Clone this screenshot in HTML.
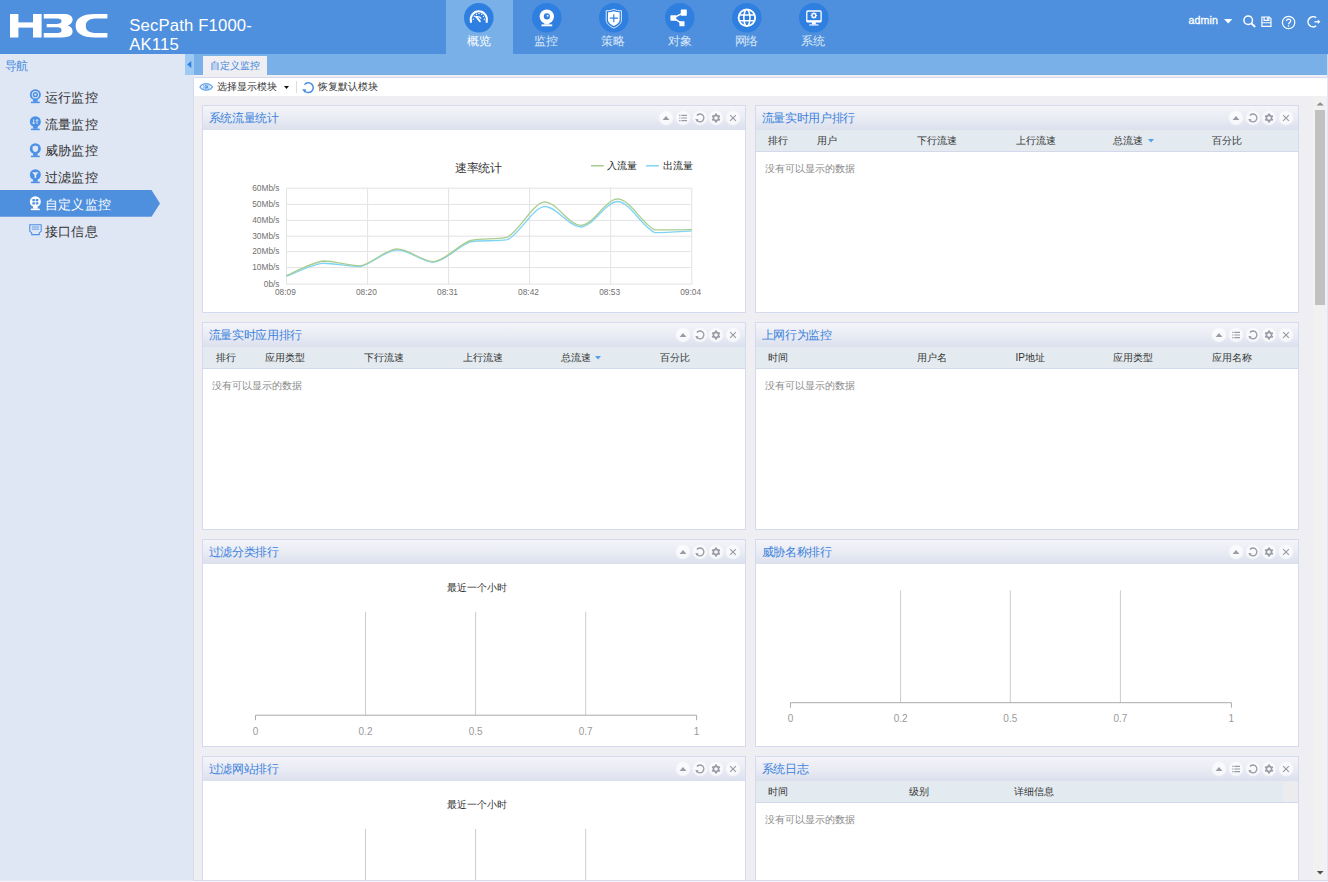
<!DOCTYPE html>
<html><head><meta charset="utf-8"><title>H3C</title>
<style>
*{margin:0;padding:0;box-sizing:border-box}
html,body{width:1328px;height:882px;overflow:hidden;background:#eeeef3;font-family:"Liberation Sans",sans-serif;font-size:10px;color:#333}
div,svg,span{position:absolute}
svg{overflow:visible}
#hdr{left:0;top:0;width:1328px;height:54px;background:#4f90de}
#prod{left:129.3px;top:16.2px;transform:translateY(.5px);color:#fff;font-size:16.7px;line-height:18.5px;white-space:nowrap;letter-spacing:.15px}
.nav{top:0;width:67px;height:54px}
.navbg{left:446px;top:0;width:67px;height:54px;background:#7ab0e8}
.nav svg{left:19.2px;top:2.6px;width:29.6px;height:29.6px}
.nav .t{left:0;width:67px;top:33.1px;text-align:center;color:#dbe8f8;font-size:11.67px;letter-spacing:-.33px;line-height:16px}
.nav.on .t{color:#fff}
#side{left:0;top:54px;width:193px;height:828px;background:#dfe6f4}
#side .h{left:4.5px;top:4px;letter-spacing:-.33px;font-size:11.67px;line-height:16px;color:#4a8fe0}
.mi{left:0;width:185px;height:27px;letter-spacing:.33px;font-size:13.3px;line-height:27px;color:#333}
.mi span{left:44.6px;top:0;white-space:nowrap}
.mi svg{left:28.9px;top:5.4px;width:12.7px;height:14.8px}
.mi.on{color:#fff}
#handle{left:185px;top:54px;width:9px;height:21px;background:#9ccaf3}
#tabbar{left:194px;top:54px;width:1134px;height:21px;background:#7ab0e8}
#tab{left:203px;top:56px;width:64px;height:21px;background:#eeeef3;color:#3d84dc;font-size:10px;line-height:19px;text-align:center}
#tool{left:194px;top:78px;width:1134px;height:18px;background:#fff}
.tx{top:0;line-height:18px;font-size:10px;color:#333;white-space:nowrap}
.pn{width:544px;height:208px;background:#fff;border:1px solid #d6daee}
.pn .hd{left:0;top:0;width:542px;height:24px;background:linear-gradient(#f4f4f9,#eaecf4 50%,#dbe0ee);}
.pn .ti{left:5.8px;top:-0.9px;line-height:25px;letter-spacing:-.33px;font-size:11.67px;color:#3b82dc;white-space:nowrap}
.pn .gh{left:0;top:24px;width:542px;height:22px;background:#e4ebf0;border-bottom:1px solid #d3d8ec}
.pn .gh span{top:1px;line-height:20px;font-size:10px;color:#333;white-space:nowrap}
.pn .nd{left:8.5px;top:55.6px;line-height:14px;font-size:10px;color:#8a8a8a;white-space:nowrap}
.bt{top:3.6px;width:16px;height:16px}
</style></head><body>
<div id="wrap" style="left:0;top:0;width:1328px;height:882px;overflow:hidden">
<div id="hdr">
<svg style="left:10.3px;top:13.7px" width="98" height="24" viewBox="0 0 98 24" fill="#fff">
<rect x="0" y="0" width="8.4" height="23.5"/><rect x="23" y="0" width="8.6" height="23.5"/><rect x="8" y="8.4" width="16" height="5.2"/>
<path d="M33.75,0 H53 C59.5,0 62.6,2 62.6,5.6 C62.6,9 60,11 57.5,11.5 C60.5,12 62.6,14 62.6,17.6 C62.6,21.5 59,23.5 52,23.5 H33.75 V19.1 H47 C50.5,19.1 51.5,18 51.5,16.3 C51.5,14.3 50.5,13.2 47,13.2 H36.7 V9.9 H47 C50.5,9.9 51.5,8.8 51.5,7.1 C51.5,5.3 50.5,4.4 47,4.4 H33.75 Z"/>
<path d="M97.4,0 H85 C72,0 65.6,4.5 65.6,11.75 C65.6,19 72,23.5 85,23.5 H97.4 V19.1 H87 C79,19.1 75.8,16.5 75.8,11.75 C75.8,7 79,4.4 87,4.4 H97.4 Z"/>
</svg>
<div id="prod">SecPath F1000-<br>AK115</div>
<div class="navbg"></div><div class="nav on" style="left:445.1px"><svg viewBox="0 0 30 30"><circle cx="15" cy="15" r="15" fill="#2f7fe0"/><g transform="translate(0,-1.25)"><path d="M7.0,21.3 L7.0,19.6 A8.2,8.2 0 1 1 23.0,19.6 L23.0,21.3" fill="none" stroke="#fff" stroke-width="2.1"/>
<g fill="#fff"><circle cx="9.5" cy="17.6" r=".75"/><circle cx="10.6" cy="14.6" r=".75"/><circle cx="12.6" cy="12.6" r=".75"/><circle cx="15.2" cy="11.9" r=".75"/><circle cx="17.9" cy="12.7" r=".75"/><circle cx="19.8" cy="14.8" r=".75"/><circle cx="20.7" cy="17.6" r=".75"/></g>
<path d="M12.2,15.3 C14,14.9 16.2,15.4 17,16.6" fill="none" stroke="#fff" stroke-width="1.3" stroke-linecap="round"/>
<path d="M12.4,15.2 L16.1,19.7" stroke="#fff" stroke-width="1.9" stroke-linecap="round"/></g></svg><div class="t">概览</div></div>
<div class="nav" style="left:512.6px"><svg viewBox="0 0 30 30"><circle cx="15" cy="15" r="15" fill="#2f7fe0"/><circle cx="15" cy="13.8" r="7.3" fill="#fff"/><circle cx="15.1" cy="13.6" r="3.1" fill="#2f7fe0"/><circle cx="15.8" cy="13" r="1.05" fill="#fff" opacity=".85"/>
<path d="M12.7,20 L17.3,20 L17.5,21.9 L12.5,21.9 Z" fill="#fff"/><rect x="9.6" y="21.7" width="10.9" height="1.9" fill="#fff"/></svg><div class="t">监控</div></div>
<div class="nav" style="left:579.4px"><svg viewBox="0 0 30 30"><circle cx="15" cy="15" r="15" fill="#2f7fe0"/><path d="M15,6.3 C17.5,7.6 20,7.9 22.7,7.8 L22.7,17.5 C22.7,20.8 19.6,23.4 15,25.5 C10.4,23.4 7.3,20.8 7.3,17.5 L7.3,7.8 C10,7.9 12.5,7.6 15,6.3 Z" fill="none" stroke="#fff" stroke-width="0.85"/>
<path d="M15,8.3 C17,9.2 19,9.5 20.9,9.4 L20.9,17.2 C20.9,19.6 18.6,21.6 15,23.2 C11.4,21.6 9.1,19.6 9.1,17.2 L9.1,9.4 C11,9.5 13,9.2 15,8.3 Z" fill="#fff"/>
<path d="M15,11.5 L15,19.6 M11,15.3 L19.2,15.3" stroke="#2f7fe0" stroke-width="1.15"/></svg><div class="t">策略</div></div>
<div class="nav" style="left:646.3px"><svg viewBox="0 0 30 30"><circle cx="15" cy="15" r="15" fill="#2f7fe0"/><path d="M8.5,15.1 L19,9.8 M8.5,15.1 L17.2,21" stroke="#fff" stroke-width="1.5"/>
<rect x="5.5" y="12.3" width="5.9" height="5.7" rx="0.5" fill="#fff"/><rect x="16" y="6.6" width="6.1" height="6.3" rx="0.5" fill="#fff"/><rect x="14.6" y="18.5" width="5.2" height="5.1" rx="0.5" fill="#fff"/></svg><div class="t">对象</div></div>
<div class="nav" style="left:712.9px"><svg viewBox="0 0 30 30"><circle cx="15" cy="15" r="15" fill="#2f7fe0"/><g fill="none" stroke="#fff"><circle cx="15.1" cy="15" r="8.4" stroke-width="1.9"/><ellipse cx="15.1" cy="15" rx="3.1" ry="8.4" stroke-width="1.6"/><path d="M7.3,12.1 H22.9 M7.3,17.9 H22.9" stroke-width="1.5"/></g></svg><div class="t">网络</div></div>
<div class="nav" style="left:779.6px"><svg viewBox="0 0 30 30"><circle cx="15" cy="15" r="15" fill="#2f7fe0"/><rect x="7.9" y="8.1" width="14.5" height="10.9" rx="1" fill="none" stroke="#fff" stroke-width="1.3"/><rect x="7.9" y="17.4" width="14.5" height="2" fill="#fff"/>
<path d="M13.2,19.3 L16.9,19.3 L17.1,21.8 L13,21.8 Z" fill="#fff"/><rect x="10.4" y="21.7" width="9.4" height="1.1" fill="#fff"/>
<circle cx="15.1" cy="12.65" r="1.9" fill="none" stroke="#fff" stroke-width="1.3"/><path d="M15.1,9.4 V10.6 M15.1,14.7 V15.9 M11.85,12.65 H13.05 M17.15,12.65 H18.35 M12.8,10.35 L13.65,11.2 M16.55,14.1 L17.4,14.95 M17.4,10.35 L16.55,11.2 M13.65,14.1 L12.8,14.95" stroke="#fff" stroke-width="1.15"/></svg><div class="t">系统</div></div>

<div style="left:1188.5px;top:12.5px;color:#fff;font-size:10.6px;line-height:15px;-webkit-text-stroke:.3px #fff;letter-spacing:.15px">admin</div>
<svg style="left:1224px;top:18.6px" width="9" height="5"><path d="M0,0 H8.4 L4.2,4.4 Z" fill="#fff"/></svg>
<svg style="left:1242px;top:14px" width="15" height="15" viewBox="0 0 15 15"><circle cx="6.2" cy="6.2" r="4.3" fill="none" stroke="#fff" stroke-width="1.5"/><path d="M9.5,9.5 L12.7,12.5" stroke="#fff" stroke-width="1.8" stroke-linecap="round"/></svg>
<svg style="left:1260.5px;top:15.5px" width="12" height="12" viewBox="0 0 12 12"><path d="M0.9,1 H8.3 L10,2.7 V10.4 H0.9 Z" fill="none" stroke="#fff" stroke-width="1.15"/><path d="M3.1,1 V4.3 H7.9 V1 M6.5,1.4 V3.6 M0.9,6.7 H10" fill="none" stroke="#fff" stroke-width="1.15"/></svg>
<svg style="left:1281px;top:14.5px" width="15" height="15" viewBox="0 0 15 15"><circle cx="7.6" cy="7.5" r="6.2" fill="none" stroke="#fff" stroke-width="1.2"/><path d="M5.5,6.1 C5.5,3.5 9.7,3.5 9.7,6 C9.7,7.5 7.6,7.6 7.6,9.3" fill="none" stroke="#fff" stroke-width="1.2"/><circle cx="7.6" cy="11" r=".8" fill="#fff"/></svg>
<svg style="left:1306px;top:15px" width="16" height="14" viewBox="0 0 16 14"><path d="M10.2,2.7 A5.1,5.1 0 1 0 10.2,10.9" fill="none" stroke="#fff" stroke-width="1.5"/><path d="M8.4,6.8 H13" stroke="#fff" stroke-width="1.3"/><path d="M11.8,4.6 L14.4,6.8 L11.8,9 Z" fill="#fff"/></svg>

</div>
<div id="side"><div class="h">导航</div>
<div class="mi" style="top:30.0px"><svg viewBox="0 0 12 14"><circle cx="6" cy="5.4" r="5.2" fill="#4a90e6"/><path d="M4,10 H8 L8.4,12 H3.6 Z" fill="#4a90e6"/><rect x="1.8" y="12" width="8.4" height="1.4" fill="#4a90e6"/><circle cx="6" cy="5.4" r="3" fill="none" stroke="#dfe6f4" stroke-width="1"/><circle cx="6" cy="5.4" r="1.1" fill="#dfe6f4"/></svg><span>运行监控</span></div>
<div class="mi" style="top:56.7px"><svg viewBox="0 0 12 14"><circle cx="6" cy="5.4" r="5.2" fill="#4a90e6"/><path d="M4,10 H8 L8.4,12 H3.6 Z" fill="#4a90e6"/><rect x="1.8" y="12" width="8.4" height="1.4" fill="#4a90e6"/><path d="M4.4,3.2 V7.4 M3.2,6.2 L4.4,7.6 L5.6,6.2 M7.6,7.6 V3.4 M6.4,4.6 L7.6,3.2 L8.8,4.6" fill="none" stroke="#dfe6f4" stroke-width=".9"/></svg><span>流量监控</span></div>
<div class="mi" style="top:83.4px"><svg viewBox="0 0 12 14"><circle cx="6" cy="5.4" r="5.2" fill="#4a90e6"/><path d="M4,10 H8 L8.4,12 H3.6 Z" fill="#4a90e6"/><rect x="1.8" y="12" width="8.4" height="1.4" fill="#4a90e6"/><path d="M6,2.4 L8.6,3.4 V5.6 C8.6,7.2 7.4,8.2 6,8.8 C4.6,8.2 3.4,7.2 3.4,5.6 V3.4 Z" fill="#dfe6f4"/></svg><span>威胁监控</span></div>
<div class="mi" style="top:110.1px"><svg viewBox="0 0 12 14"><circle cx="6" cy="5.4" r="5.2" fill="#4a90e6"/><path d="M4,10 H8 L8.4,12 H3.6 Z" fill="#4a90e6"/><rect x="1.8" y="12" width="8.4" height="1.4" fill="#4a90e6"/><path d="M3,3 H9 L6.8,5.8 V8.4 H5.2 V5.8 Z" fill="#dfe6f4"/></svg><span>过滤监控</span></div>
<svg style="left:0;top:136.4px" width="162" height="27"><path d="M0,0 H151.5 L160,13.4 L151.5,26.8 H0 Z" fill="#4f90de"/></svg><div class="mi on" style="top:136.8px"><svg viewBox="0 0 12 14"><circle cx="6" cy="5.4" r="5.2" fill="#fff"/><path d="M4,10 H8 L8.4,12 H3.6 Z" fill="#fff"/><rect x="1.8" y="12" width="8.4" height="1.4" fill="#fff"/><path d="M3.2,2.8 H5.6 V5 H3.2 Z M6.4,2.8 H8.8 V5 H6.4 Z M3.2,5.8 H5.6 V8 H3.2 Z M6.4,5.8 H8.8 V8 H6.4 Z" fill="#4f90de"/></svg><span>自定义监控</span></div>
<div class="mi" style="top:163.5px"><svg viewBox="0 0 12 14" style="left:28.5px;width:13px"><path d="M0.6,1.6 H11.4 V7.8 L9.6,9.4 V11 H2.4 V9.4 L0.6,7.8 Z" fill="none" stroke="#4a90e6" stroke-width="1"/><path d="M2.6,3.8 H9.4 M2.6,5.8 H9.4" stroke="#4a90e6" stroke-width=".8"/></svg><span>接口信息</span></div>

</div>
<div id="handle"><svg width="9" height="21" style="left:0;top:0"><path d="M6.3,7 L6.3,14 L2.2,10.5 Z" fill="#2f7fe0"/></svg></div>
<div id="tabbar"></div>
<div style="left:193px;top:77px;width:1135px;height:1px;background:#d6d9ee"></div>
<div style="left:193px;top:77px;width:1px;height:805px;background:#d6d9ee"></div>
<div id="tab">自定义监控</div>
<div id="tool">
<svg style="left:5.2px;top:4.3px" width="15" height="10" viewBox="0 0 15 10"><path d="M1,4.9 C3.6,0.6 10.8,0.6 13.4,4.9 C10.8,9.2 3.6,9.2 1,4.9 Z" fill="none" stroke="#6aa6ec" stroke-width="1.35"/><circle cx="7.2" cy="4.9" r="3.1" fill="none" stroke="#7db2ee" stroke-width=".9"/><circle cx="7.2" cy="4.9" r="1.9" fill="#4a8fe0"/><circle cx="6.9" cy="4.7" r=".7" fill="#cfe2f8"/></svg>
<div class="tx" style="left:23.2px">选择显示模块</div>
<svg style="left:90px;top:7.5px" width="6" height="4"><path d="M0,0 H5 L2.5,3 Z" fill="#111"/></svg>
<div style="left:102px;top:3px;width:1px;height:12px;background:#dcdcdc"></div>
<svg style="left:107.5px;top:3px" width="13" height="13" viewBox="0 0 13 13"><path d="M2.4,9.6 A4.9,4.9 0 1 0 2.5,3.6" fill="none" stroke="#4a8fe0" stroke-width="1.5"/><path d="M0.2,8.3 L4.2,8.2 L2.6,11.8 Z" fill="#4a8fe0"/></svg>
<div class="tx" style="left:124.2px">恢复默认模块</div>

</div>
<div class="pn" style="left:202px;top:105px"><div class="hd"></div><div class="ti">系统流量统计</div><svg class="bt" style="left:454.8px" viewBox="0 0 16 16"><circle cx="8" cy="8" r="7.6" fill="#fff" opacity=".35"/><circle cx="8" cy="8" r="6.7" fill="#fff" opacity=".55"/><path d="M4.6,9.9 L8,5.9 L11.4,9.9 Z" fill="#9a9aa6"/></svg><svg class="bt" style="left:471.7px" viewBox="0 0 16 16"><circle cx="8" cy="8" r="7.6" fill="#fff" opacity=".35"/><circle cx="8" cy="8" r="6.7" fill="#fff" opacity=".55"/><path d="M4.2,5.4 H5.4 M4.2,8 H5.4 M4.2,10.6 H5.4" stroke="#9a9aa6" stroke-width="1.2"/><path d="M6.3,5.4 H12 M6.3,8 H12 M6.3,10.6 H12" stroke="#9a9aa6" stroke-width="1.1"/></svg><svg class="bt" style="left:488.5px" viewBox="0 0 16 16"><circle cx="8" cy="8" r="7.6" fill="#fff" opacity=".35"/><circle cx="8" cy="8" r="6.7" fill="#fff" opacity=".55"/><path d="M5,10.4 A3.9,3.9 0 1 0 4.9,5.5" fill="none" stroke="#9a9aa6" stroke-width="1.3"/><path d="M3.3,9 L6.5,9.3 L4.9,12 Z" fill="#9a9aa6"/></svg><svg class="bt" style="left:505.4px" viewBox="0 0 16 16"><circle cx="8" cy="8" r="7.6" fill="#fff" opacity=".35"/><circle cx="8" cy="8" r="6.7" fill="#fff" opacity=".55"/><circle cx="8" cy="8" r="2.6" fill="none" stroke="#9a9aa6" stroke-width="1.6"/><path d="M8,3.6 V5 M8,11 V12.4 M4.2,5.8 L5.4,6.5 M10.6,9.5 L11.8,10.2 M11.8,5.8 L10.6,6.5 M5.4,9.5 L4.2,10.2" stroke="#9a9aa6" stroke-width="2"/></svg><svg class="bt" style="left:522.2px" viewBox="0 0 16 16"><circle cx="8" cy="8" r="7.6" fill="#fff" opacity=".35"/><circle cx="8" cy="8" r="6.7" fill="#fff" opacity=".55"/><path d="M5.1,5.1 L10.9,10.9 M10.9,5.1 L5.1,10.9" stroke="#9a9aa6" stroke-width="1.15"/></svg><svg style="left:0;top:25px" width="542" height="181" viewBox="203 131 542 181"><path d="M286.5,188.2 H691.8" stroke="#e3e3e3" stroke-width="1"/><path d="M286.5,204.4 H691.8" stroke="#e3e3e3" stroke-width="1"/><path d="M286.5,220.4 H691.8" stroke="#e3e3e3" stroke-width="1"/><path d="M286.5,236.2 H691.8" stroke="#e3e3e3" stroke-width="1"/><path d="M286.5,251.6 H691.8" stroke="#e3e3e3" stroke-width="1"/><path d="M286.5,267.5 H691.8" stroke="#e3e3e3" stroke-width="1"/><path d="M286.5,284.1 H691.8" stroke="#e3e3e3" stroke-width="1"/><path d="M286.5,188.2 V284.1" stroke="#e3e3e3" stroke-width="1"/><path d="M367.6,188.2 V284.1" stroke="#e3e3e3" stroke-width="1"/><path d="M448.6,188.2 V284.1" stroke="#e3e3e3" stroke-width="1"/><path d="M529.6,188.2 V284.1" stroke="#e3e3e3" stroke-width="1"/><path d="M610.7,188.2 V284.1" stroke="#e3e3e3" stroke-width="1"/><path d="M691.8,188.2 V284.1" stroke="#e3e3e3" stroke-width="1"/><path d="M286.40,276.20 C292.54,274.03 310.97,264.82 323.25,263.20 C335.53,263.20 347.82,266.50 360.10,266.50 C372.38,264.27 384.67,250.52 396.95,249.80 C409.23,249.80 421.52,262.20 433.80,262.20 C446.08,260.87 458.37,245.55 470.65,241.80 C482.93,239.70 495.22,241.80 507.50,239.70 C519.78,233.80 532.07,208.52 544.35,206.40 C556.63,206.40 568.92,227.00 581.20,227.00 C593.48,226.18 605.77,201.50 618.05,201.50 C630.33,202.43 642.62,227.70 654.90,232.60 C667.18,232.60 685.61,231.18 691.75,230.90" fill="none" stroke="#7fd4f6" stroke-width="1.35"/><path d="M286.40,275.70 C292.54,273.25 310.97,262.63 323.25,261.00 C335.53,261.00 347.82,265.90 360.10,265.90 C372.38,263.88 384.67,249.62 396.95,248.90 C409.23,248.90 421.52,261.60 433.80,261.60 C446.08,260.20 458.37,244.58 470.65,240.50 C482.93,237.10 495.22,240.50 507.50,237.10 C519.78,230.67 532.07,203.85 544.35,201.90 C556.63,201.90 568.92,225.40 581.20,225.40 C593.48,224.90 605.77,198.90 618.05,198.90 C630.33,199.65 642.62,224.77 654.90,229.90 C667.18,229.90 685.61,229.73 691.75,229.70" fill="none" stroke="#a9cd8e" stroke-width="1.35"/><g font-size="8.33" fill="#707070" text-anchor="end"><text x="279.5" y="190.7">60Mb/s</text><text x="279.5" y="206.9">50Mb/s</text><text x="279.5" y="222.9">40Mb/s</text><text x="279.5" y="238.7">30Mb/s</text><text x="279.5" y="254.1">20Mb/s</text><text x="279.5" y="270.0">10Mb/s</text><text x="279.5" y="286.6">0b/s</text></g><g font-size="8.33" fill="#707070" text-anchor="middle"><text x="285.4" y="294.8">08:09</text><text x="366.4" y="294.8">08:20</text><text x="447.5" y="294.8">08:31</text><text x="528.5" y="294.8">08:42</text><text x="609.6" y="294.8">08:53</text><text x="690.6" y="294.8">09:04</text></g><text x="478.2" y="171.6" font-size="11.67" letter-spacing="-.33" fill="#333" text-anchor="middle">速率统计</text><path d="M591,165.8 H603.8" stroke="#a9cd8e" stroke-width="1.5"/><text x="607.2" y="169.3" font-size="10" fill="#222">入流量</text><path d="M646,165.8 H658.8" stroke="#7fd4f6" stroke-width="1.5"/><text x="662.6" y="169.3" font-size="10" fill="#222">出流量</text></svg></div>
<div class="pn" style="left:755px;top:105px"><div class="hd"></div><div class="ti">流量实时用户排行</div><svg class="bt" style="left:471.7px" viewBox="0 0 16 16"><circle cx="8" cy="8" r="7.6" fill="#fff" opacity=".35"/><circle cx="8" cy="8" r="6.7" fill="#fff" opacity=".55"/><path d="M4.6,9.9 L8,5.9 L11.4,9.9 Z" fill="#9a9aa6"/></svg><svg class="bt" style="left:488.5px" viewBox="0 0 16 16"><circle cx="8" cy="8" r="7.6" fill="#fff" opacity=".35"/><circle cx="8" cy="8" r="6.7" fill="#fff" opacity=".55"/><path d="M5,10.4 A3.9,3.9 0 1 0 4.9,5.5" fill="none" stroke="#9a9aa6" stroke-width="1.3"/><path d="M3.3,9 L6.5,9.3 L4.9,12 Z" fill="#9a9aa6"/></svg><svg class="bt" style="left:505.4px" viewBox="0 0 16 16"><circle cx="8" cy="8" r="7.6" fill="#fff" opacity=".35"/><circle cx="8" cy="8" r="6.7" fill="#fff" opacity=".55"/><circle cx="8" cy="8" r="2.6" fill="none" stroke="#9a9aa6" stroke-width="1.6"/><path d="M8,3.6 V5 M8,11 V12.4 M4.2,5.8 L5.4,6.5 M10.6,9.5 L11.8,10.2 M11.8,5.8 L10.6,6.5 M5.4,9.5 L4.2,10.2" stroke="#9a9aa6" stroke-width="2"/></svg><svg class="bt" style="left:522.2px" viewBox="0 0 16 16"><circle cx="8" cy="8" r="7.6" fill="#fff" opacity=".35"/><circle cx="8" cy="8" r="6.7" fill="#fff" opacity=".55"/><path d="M5.1,5.1 L10.9,10.9 M10.9,5.1 L5.1,10.9" stroke="#9a9aa6" stroke-width="1.15"/></svg><div class="gh"><span style="left:12.4px">排行</span><span style="left:61.3px">用户</span><span style="left:160.7px">下行流速</span><span style="left:259.5px">上行流速</span><span style="left:357.4px">总流速</span><span style="left:455.8px">百分比</span><svg style="left:391.5px;top:8.7px" width="7" height="4"><path d="M0,0 H6 L3,3.4 Z" fill="#559fe9"/></svg></div><div class="nd">没有可以显示的数据</div></div>
<div class="pn" style="left:202px;top:322px"><div class="hd"></div><div class="ti">流量实时应用排行</div><svg class="bt" style="left:471.7px" viewBox="0 0 16 16"><circle cx="8" cy="8" r="7.6" fill="#fff" opacity=".35"/><circle cx="8" cy="8" r="6.7" fill="#fff" opacity=".55"/><path d="M4.6,9.9 L8,5.9 L11.4,9.9 Z" fill="#9a9aa6"/></svg><svg class="bt" style="left:488.5px" viewBox="0 0 16 16"><circle cx="8" cy="8" r="7.6" fill="#fff" opacity=".35"/><circle cx="8" cy="8" r="6.7" fill="#fff" opacity=".55"/><path d="M5,10.4 A3.9,3.9 0 1 0 4.9,5.5" fill="none" stroke="#9a9aa6" stroke-width="1.3"/><path d="M3.3,9 L6.5,9.3 L4.9,12 Z" fill="#9a9aa6"/></svg><svg class="bt" style="left:505.4px" viewBox="0 0 16 16"><circle cx="8" cy="8" r="7.6" fill="#fff" opacity=".35"/><circle cx="8" cy="8" r="6.7" fill="#fff" opacity=".55"/><circle cx="8" cy="8" r="2.6" fill="none" stroke="#9a9aa6" stroke-width="1.6"/><path d="M8,3.6 V5 M8,11 V12.4 M4.2,5.8 L5.4,6.5 M10.6,9.5 L11.8,10.2 M11.8,5.8 L10.6,6.5 M5.4,9.5 L4.2,10.2" stroke="#9a9aa6" stroke-width="2"/></svg><svg class="bt" style="left:522.2px" viewBox="0 0 16 16"><circle cx="8" cy="8" r="7.6" fill="#fff" opacity=".35"/><circle cx="8" cy="8" r="6.7" fill="#fff" opacity=".55"/><path d="M5.1,5.1 L10.9,10.9 M10.9,5.1 L5.1,10.9" stroke="#9a9aa6" stroke-width="1.15"/></svg><div class="gh"><span style="left:12.8px">排行</span><span style="left:61.7px">应用类型</span><span style="left:161.3px">下行流速</span><span style="left:259.6px">上行流速</span><span style="left:358.2px">总流速</span><span style="left:457.0px">百分比</span><svg style="left:392.0px;top:8.7px" width="7" height="4"><path d="M0,0 H6 L3,3.4 Z" fill="#559fe9"/></svg></div><div class="nd">没有可以显示的数据</div></div>
<div class="pn" style="left:755px;top:322px"><div class="hd"></div><div class="ti">上网行为监控</div><svg class="bt" style="left:454.8px" viewBox="0 0 16 16"><circle cx="8" cy="8" r="7.6" fill="#fff" opacity=".35"/><circle cx="8" cy="8" r="6.7" fill="#fff" opacity=".55"/><path d="M4.6,9.9 L8,5.9 L11.4,9.9 Z" fill="#9a9aa6"/></svg><svg class="bt" style="left:471.7px" viewBox="0 0 16 16"><circle cx="8" cy="8" r="7.6" fill="#fff" opacity=".35"/><circle cx="8" cy="8" r="6.7" fill="#fff" opacity=".55"/><path d="M4.2,5.4 H5.4 M4.2,8 H5.4 M4.2,10.6 H5.4" stroke="#9a9aa6" stroke-width="1.2"/><path d="M6.3,5.4 H12 M6.3,8 H12 M6.3,10.6 H12" stroke="#9a9aa6" stroke-width="1.1"/></svg><svg class="bt" style="left:488.5px" viewBox="0 0 16 16"><circle cx="8" cy="8" r="7.6" fill="#fff" opacity=".35"/><circle cx="8" cy="8" r="6.7" fill="#fff" opacity=".55"/><path d="M5,10.4 A3.9,3.9 0 1 0 4.9,5.5" fill="none" stroke="#9a9aa6" stroke-width="1.3"/><path d="M3.3,9 L6.5,9.3 L4.9,12 Z" fill="#9a9aa6"/></svg><svg class="bt" style="left:505.4px" viewBox="0 0 16 16"><circle cx="8" cy="8" r="7.6" fill="#fff" opacity=".35"/><circle cx="8" cy="8" r="6.7" fill="#fff" opacity=".55"/><circle cx="8" cy="8" r="2.6" fill="none" stroke="#9a9aa6" stroke-width="1.6"/><path d="M8,3.6 V5 M8,11 V12.4 M4.2,5.8 L5.4,6.5 M10.6,9.5 L11.8,10.2 M11.8,5.8 L10.6,6.5 M5.4,9.5 L4.2,10.2" stroke="#9a9aa6" stroke-width="2"/></svg><svg class="bt" style="left:522.2px" viewBox="0 0 16 16"><circle cx="8" cy="8" r="7.6" fill="#fff" opacity=".35"/><circle cx="8" cy="8" r="6.7" fill="#fff" opacity=".55"/><path d="M5.1,5.1 L10.9,10.9 M10.9,5.1 L5.1,10.9" stroke="#9a9aa6" stroke-width="1.15"/></svg><div class="gh"><span style="left:12.4px">时间</span><span style="left:160.7px">用户名</span><span style="left:259.5px">IP地址</span><span style="left:357.4px">应用类型</span><span style="left:455.8px">应用名称</span></div><div class="nd">没有可以显示的数据</div></div>
<div class="pn" style="left:202px;top:539px"><div class="hd"></div><div class="ti">过滤分类排行</div><svg class="bt" style="left:471.7px" viewBox="0 0 16 16"><circle cx="8" cy="8" r="7.6" fill="#fff" opacity=".35"/><circle cx="8" cy="8" r="6.7" fill="#fff" opacity=".55"/><path d="M4.6,9.9 L8,5.9 L11.4,9.9 Z" fill="#9a9aa6"/></svg><svg class="bt" style="left:488.5px" viewBox="0 0 16 16"><circle cx="8" cy="8" r="7.6" fill="#fff" opacity=".35"/><circle cx="8" cy="8" r="6.7" fill="#fff" opacity=".55"/><path d="M5,10.4 A3.9,3.9 0 1 0 4.9,5.5" fill="none" stroke="#9a9aa6" stroke-width="1.3"/><path d="M3.3,9 L6.5,9.3 L4.9,12 Z" fill="#9a9aa6"/></svg><svg class="bt" style="left:505.4px" viewBox="0 0 16 16"><circle cx="8" cy="8" r="7.6" fill="#fff" opacity=".35"/><circle cx="8" cy="8" r="6.7" fill="#fff" opacity=".55"/><circle cx="8" cy="8" r="2.6" fill="none" stroke="#9a9aa6" stroke-width="1.6"/><path d="M8,3.6 V5 M8,11 V12.4 M4.2,5.8 L5.4,6.5 M10.6,9.5 L11.8,10.2 M11.8,5.8 L10.6,6.5 M5.4,9.5 L4.2,10.2" stroke="#9a9aa6" stroke-width="2"/></svg><svg class="bt" style="left:522.2px" viewBox="0 0 16 16"><circle cx="8" cy="8" r="7.6" fill="#fff" opacity=".35"/><circle cx="8" cy="8" r="6.7" fill="#fff" opacity=".55"/><path d="M5.1,5.1 L10.9,10.9 M10.9,5.1 L5.1,10.9" stroke="#9a9aa6" stroke-width="1.15"/></svg><svg style="left:0;top:25px" width="542" height="181" viewBox="0 25 542 181"><text x="273.5" y="50.5" font-size="10" fill="#333" text-anchor="middle">最近一个小时</text><path d="M162.5,72.0 V175.2" stroke="#ccc" stroke-width="1"/><path d="M272.6,72.0 V175.2" stroke="#ccc" stroke-width="1"/><path d="M382.7,72.0 V175.2" stroke="#ccc" stroke-width="1"/><path d="M52.5,180.2 V175.2 H493.6 V180.2" fill="none" stroke="#aaa" stroke-width="1"/><g font-size="10" fill="#999" text-anchor="middle"><text x="52.5" y="194.5">0</text><text x="162.5" y="194.5">0.2</text><text x="272.6" y="194.5">0.5</text><text x="382.7" y="194.5">0.7</text><text x="493.6" y="194.5">1</text></g></svg></div>
<div class="pn" style="left:755px;top:539px"><div class="hd"></div><div class="ti">威胁名称排行</div><svg class="bt" style="left:471.7px" viewBox="0 0 16 16"><circle cx="8" cy="8" r="7.6" fill="#fff" opacity=".35"/><circle cx="8" cy="8" r="6.7" fill="#fff" opacity=".55"/><path d="M4.6,9.9 L8,5.9 L11.4,9.9 Z" fill="#9a9aa6"/></svg><svg class="bt" style="left:488.5px" viewBox="0 0 16 16"><circle cx="8" cy="8" r="7.6" fill="#fff" opacity=".35"/><circle cx="8" cy="8" r="6.7" fill="#fff" opacity=".55"/><path d="M5,10.4 A3.9,3.9 0 1 0 4.9,5.5" fill="none" stroke="#9a9aa6" stroke-width="1.3"/><path d="M3.3,9 L6.5,9.3 L4.9,12 Z" fill="#9a9aa6"/></svg><svg class="bt" style="left:505.4px" viewBox="0 0 16 16"><circle cx="8" cy="8" r="7.6" fill="#fff" opacity=".35"/><circle cx="8" cy="8" r="6.7" fill="#fff" opacity=".55"/><circle cx="8" cy="8" r="2.6" fill="none" stroke="#9a9aa6" stroke-width="1.6"/><path d="M8,3.6 V5 M8,11 V12.4 M4.2,5.8 L5.4,6.5 M10.6,9.5 L11.8,10.2 M11.8,5.8 L10.6,6.5 M5.4,9.5 L4.2,10.2" stroke="#9a9aa6" stroke-width="2"/></svg><svg class="bt" style="left:522.2px" viewBox="0 0 16 16"><circle cx="8" cy="8" r="7.6" fill="#fff" opacity=".35"/><circle cx="8" cy="8" r="6.7" fill="#fff" opacity=".55"/><path d="M5.1,5.1 L10.9,10.9 M10.9,5.1 L5.1,10.9" stroke="#9a9aa6" stroke-width="1.15"/></svg><svg style="left:0;top:25px" width="542" height="181" viewBox="0 25 542 181"><path d="M144.6,50.4 V162.7" stroke="#ccc" stroke-width="1"/><path d="M254.3,50.4 V162.7" stroke="#ccc" stroke-width="1"/><path d="M364.4,50.4 V162.7" stroke="#ccc" stroke-width="1"/><path d="M34.5,167.7 V162.7 H475.4 V167.7" fill="none" stroke="#aaa" stroke-width="1"/><g font-size="10" fill="#999" text-anchor="middle"><text x="34.5" y="181.6">0</text><text x="144.6" y="181.6">0.2</text><text x="254.3" y="181.6">0.5</text><text x="364.4" y="181.6">0.7</text><text x="475.4" y="181.6">1</text></g></svg></div>
<div class="pn" style="left:202px;top:756px"><div class="hd"></div><div class="ti">过滤网站排行</div><svg class="bt" style="left:471.7px" viewBox="0 0 16 16"><circle cx="8" cy="8" r="7.6" fill="#fff" opacity=".35"/><circle cx="8" cy="8" r="6.7" fill="#fff" opacity=".55"/><path d="M4.6,9.9 L8,5.9 L11.4,9.9 Z" fill="#9a9aa6"/></svg><svg class="bt" style="left:488.5px" viewBox="0 0 16 16"><circle cx="8" cy="8" r="7.6" fill="#fff" opacity=".35"/><circle cx="8" cy="8" r="6.7" fill="#fff" opacity=".55"/><path d="M5,10.4 A3.9,3.9 0 1 0 4.9,5.5" fill="none" stroke="#9a9aa6" stroke-width="1.3"/><path d="M3.3,9 L6.5,9.3 L4.9,12 Z" fill="#9a9aa6"/></svg><svg class="bt" style="left:505.4px" viewBox="0 0 16 16"><circle cx="8" cy="8" r="7.6" fill="#fff" opacity=".35"/><circle cx="8" cy="8" r="6.7" fill="#fff" opacity=".55"/><circle cx="8" cy="8" r="2.6" fill="none" stroke="#9a9aa6" stroke-width="1.6"/><path d="M8,3.6 V5 M8,11 V12.4 M4.2,5.8 L5.4,6.5 M10.6,9.5 L11.8,10.2 M11.8,5.8 L10.6,6.5 M5.4,9.5 L4.2,10.2" stroke="#9a9aa6" stroke-width="2"/></svg><svg class="bt" style="left:522.2px" viewBox="0 0 16 16"><circle cx="8" cy="8" r="7.6" fill="#fff" opacity=".35"/><circle cx="8" cy="8" r="6.7" fill="#fff" opacity=".55"/><path d="M5.1,5.1 L10.9,10.9 M10.9,5.1 L5.1,10.9" stroke="#9a9aa6" stroke-width="1.15"/></svg><svg style="left:0;top:25px" width="542" height="181" viewBox="0 25 542 181"><text x="273.5" y="50.5" font-size="10" fill="#333" text-anchor="middle">最近一个小时</text><path d="M162.5,72.0 V175.2" stroke="#ccc" stroke-width="1"/><path d="M272.6,72.0 V175.2" stroke="#ccc" stroke-width="1"/><path d="M382.7,72.0 V175.2" stroke="#ccc" stroke-width="1"/><path d="M52.5,180.2 V175.2 H493.6 V180.2" fill="none" stroke="#aaa" stroke-width="1"/><g font-size="10" fill="#999" text-anchor="middle"><text x="52.5" y="194.5">0</text><text x="162.5" y="194.5">0.2</text><text x="272.6" y="194.5">0.5</text><text x="382.7" y="194.5">0.7</text><text x="493.6" y="194.5">1</text></g></svg></div>
<div class="pn" style="left:755px;top:756px"><div class="hd"></div><div class="ti">系统日志</div><svg class="bt" style="left:454.8px" viewBox="0 0 16 16"><circle cx="8" cy="8" r="7.6" fill="#fff" opacity=".35"/><circle cx="8" cy="8" r="6.7" fill="#fff" opacity=".55"/><path d="M4.6,9.9 L8,5.9 L11.4,9.9 Z" fill="#9a9aa6"/></svg><svg class="bt" style="left:471.7px" viewBox="0 0 16 16"><circle cx="8" cy="8" r="7.6" fill="#fff" opacity=".35"/><circle cx="8" cy="8" r="6.7" fill="#fff" opacity=".55"/><path d="M4.2,5.4 H5.4 M4.2,8 H5.4 M4.2,10.6 H5.4" stroke="#9a9aa6" stroke-width="1.2"/><path d="M6.3,5.4 H12 M6.3,8 H12 M6.3,10.6 H12" stroke="#9a9aa6" stroke-width="1.1"/></svg><svg class="bt" style="left:488.5px" viewBox="0 0 16 16"><circle cx="8" cy="8" r="7.6" fill="#fff" opacity=".35"/><circle cx="8" cy="8" r="6.7" fill="#fff" opacity=".55"/><path d="M5,10.4 A3.9,3.9 0 1 0 4.9,5.5" fill="none" stroke="#9a9aa6" stroke-width="1.3"/><path d="M3.3,9 L6.5,9.3 L4.9,12 Z" fill="#9a9aa6"/></svg><svg class="bt" style="left:505.4px" viewBox="0 0 16 16"><circle cx="8" cy="8" r="7.6" fill="#fff" opacity=".35"/><circle cx="8" cy="8" r="6.7" fill="#fff" opacity=".55"/><circle cx="8" cy="8" r="2.6" fill="none" stroke="#9a9aa6" stroke-width="1.6"/><path d="M8,3.6 V5 M8,11 V12.4 M4.2,5.8 L5.4,6.5 M10.6,9.5 L11.8,10.2 M11.8,5.8 L10.6,6.5 M5.4,9.5 L4.2,10.2" stroke="#9a9aa6" stroke-width="2"/></svg><svg class="bt" style="left:522.2px" viewBox="0 0 16 16"><circle cx="8" cy="8" r="7.6" fill="#fff" opacity=".35"/><circle cx="8" cy="8" r="6.7" fill="#fff" opacity=".55"/><path d="M5.1,5.1 L10.9,10.9 M10.9,5.1 L5.1,10.9" stroke="#9a9aa6" stroke-width="1.15"/></svg><div class="gh"><span style="left:12.4px">时间</span><span style="left:152.9px">级别</span><span style="left:258.0px">详细信息</span><div style="left:527px;top:0;width:15px;height:21px;background:#ececee"></div></div><div class="nd">没有可以显示的数据</div></div>

<div style="left:1313px;top:96px;width:14px;height:784px;background:#f1f1f1"></div>
<div style="left:1327px;top:54px;width:1px;height:23px;background:#c4dbf5"></div><div style="left:1327px;top:77px;width:1px;height:803px;background:#e3e5f2"></div>
<div style="left:1315px;top:110.4px;width:10.2px;height:195px;background:#c1c1c1"></div>
<svg style="left:1316px;top:101px" width="9" height="6"><path d="M0.6,4.6 L4.2,1.2 L7.8,4.6 Z" fill="#8a8a8a"/></svg>
<svg style="left:1316px;top:870.2px" width="9" height="6"><path d="M0.8,1 L4.2,4.6 L7.6,1 Z" fill="#505050"/></svg>
<div style="left:0;top:880px;width:193px;height:1px;background:#e6eaf5"></div>
<div style="left:193px;top:880px;width:1135px;height:1px;background:#d9dcef"></div>
<div style="left:0;top:881px;width:1328px;height:1px;background:#f3f4f9"></div>

</div>
</body></html>
